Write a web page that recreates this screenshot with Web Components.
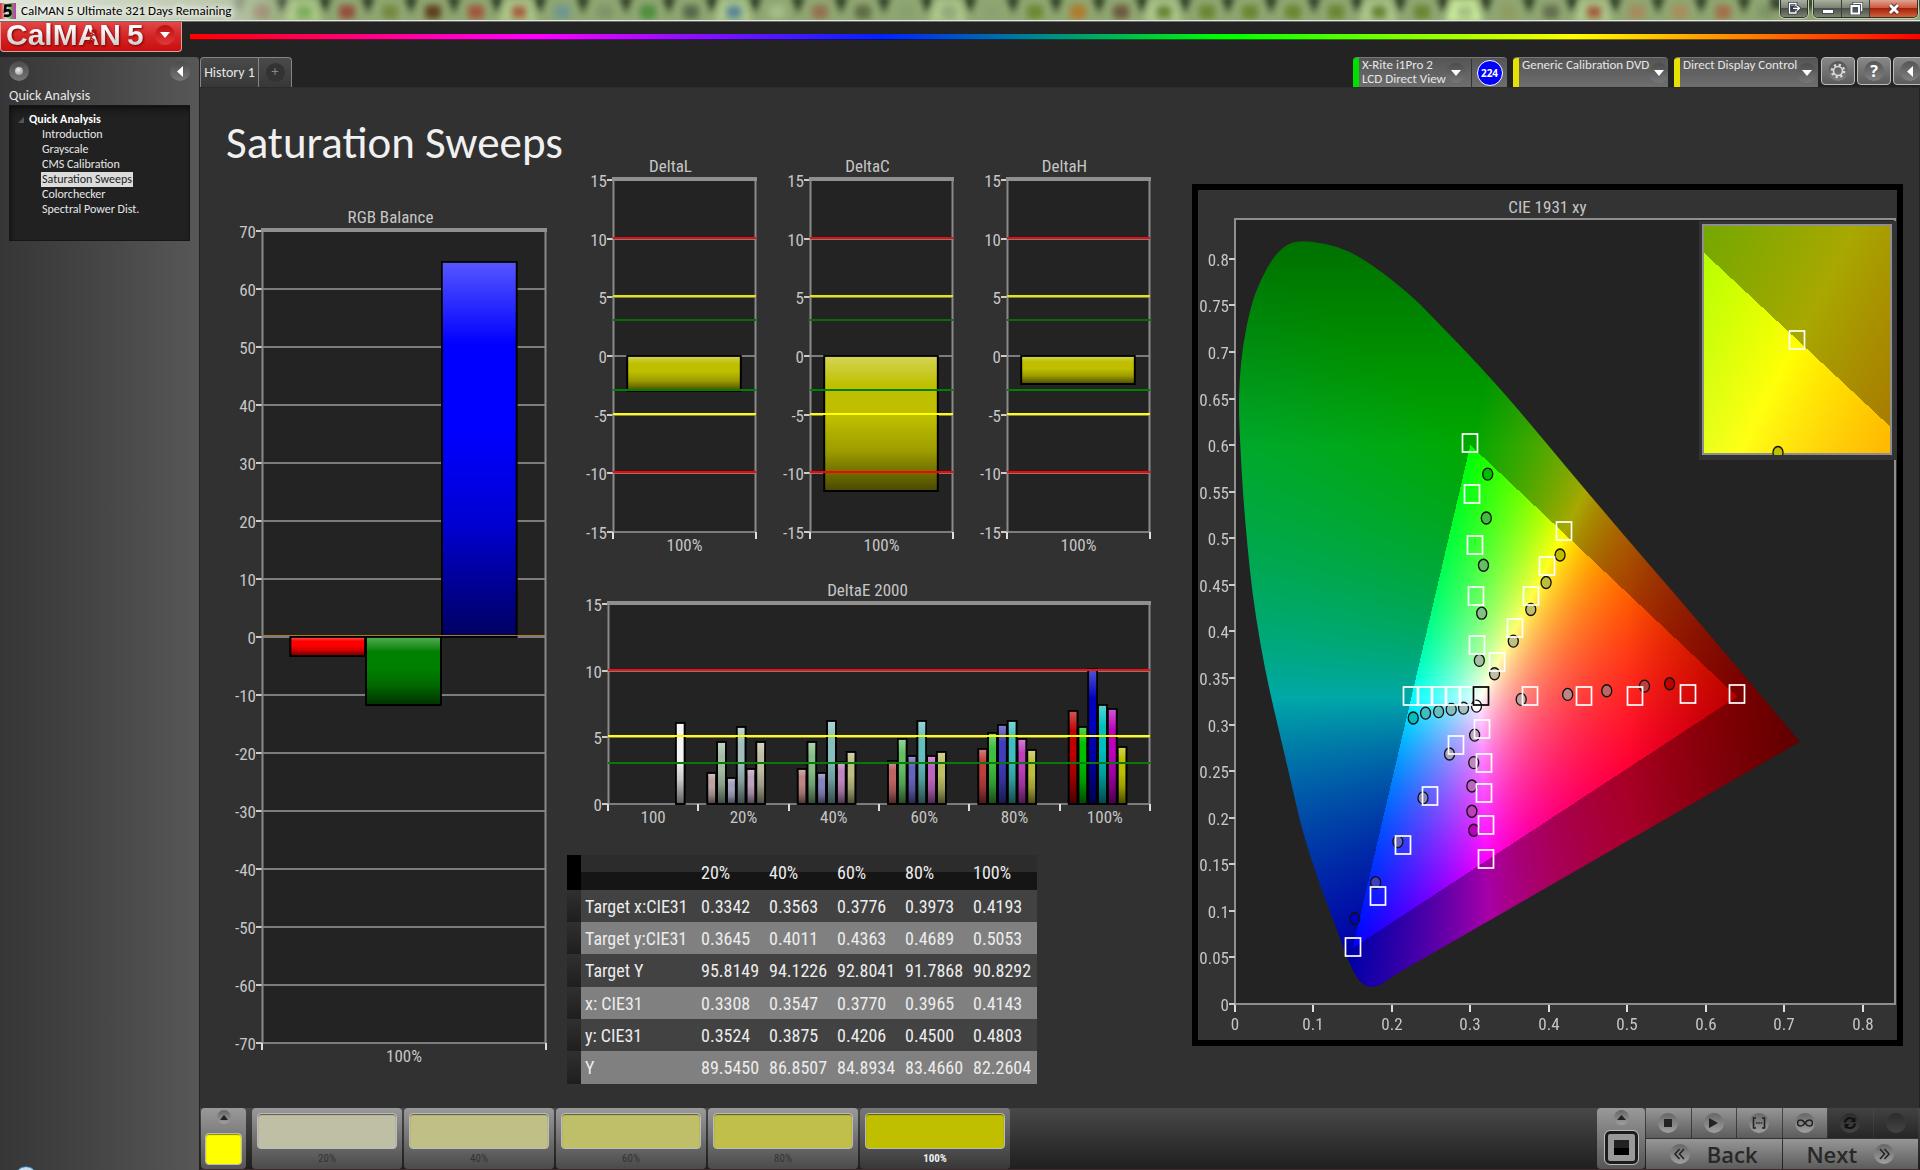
<!DOCTYPE html>
<html lang="en">
<head>
<meta charset="utf-8">
<title>CalMAN 5 Ultimate 321 Days Remaining</title>
<style>
body { margin: 0; background: #232323; color: #e6e6e6; font-family: Carlito, Lato, "Open Sans", sans-serif; font-size: 14px; }
</style>
</head>
<body>
<cal-app></cal-app>
<script>
const define = (name, html, setup) => customElements.define(name, class extends HTMLElement {
  connectedCallback() {
    if (this.shadowRoot) return;
    const t = document.createElement('template');
    t.innerHTML = html;
    this.attachShadow({ mode: 'open' }).append(t.content.cloneNode(true));
    if (setup) setup.call(this, this.shadowRoot);
  }
});
const reset = `:host,*{box-sizing:border-box} button{font:inherit;color:inherit;border:0;padding:0;margin:0;background:none;cursor:pointer} a{color:inherit;text-decoration:none} svg{display:block}`;

/* ---------- title bar ---------- */
define('window-bar', `<style>${reset}
:host{display:grid;height:22px;background:#8fa671;border-bottom:1px solid #6b6b6b;overflow:hidden}
:host>*{grid-area:1/1}
.back{width:100%;height:21px;border-bottom:1px solid #e4e6df}
.row{display:flex;align-items:flex-start;justify-content:space-between;padding-right:2px}
.name{display:flex;align-items:center;gap:5px;height:21px;color:#000;font-size:13px;line-height:21px}
.name span{text-shadow:0 0 6px #fff,0 0 6px #fff,0 0 10px #fff}
.ctl{display:flex;gap:5px}
.grp{display:flex;border:1px solid #2e332a;border-top:0;border-radius:0 0 5px 5px;overflow:hidden;box-shadow:0 0 0 1px #c4ccb8}
button{height:17px;width:28px;display:grid;place-items:center;background:linear-gradient(#a9b09f,#7b8274 45%,#4b5146 50%,#7d8575);border-right:1px solid #3a3f36}
button:last-child{border-right:0}
.grp .x{width:47px;background:linear-gradient(#e0a493,#cf5a3d 45%,#a5210b 50%,#d2603c)}
.one button{width:26px}
</style>
<svg class="back" aria-hidden="true"></svg>
<div class="row"><div class="name">
<svg width="16" height="16" viewBox="0 0 16 16"><defs><linearGradient id="q"><stop stop-color="#d33"/><stop offset=".4" stop-color="#ddd"/><stop offset=".7" stop-color="#6a4"/><stop offset="1" stop-color="#c2c"/></linearGradient></defs><rect width="16" height="16" fill="url(#q)"/><path d="M11.500 2.500H5.500L5 8Q10.500 6 10.500 10T4 12.500" fill="none" stroke="#000" stroke-width="2.600"/></svg>
<span>CalMAN 5 Ultimate 321 Days Remaining</span></div>
<div class="ctl"><div class="grp one"><button aria-label="Detach"><svg width="14" height="13" viewBox="0 0 14 13" fill="none"><path d="M9 4V1.500H2.500V11H9V8.500M5.500 4v4.500M6 6.300h6M10 4l2.500 2.300L10 8.500" stroke="#333a4a" stroke-width="3"/><path d="M9 4V1.500H2.500V11H9V8.500M6 6.300h6M10 4l2.500 2.300L10 8.500" stroke="#fff" stroke-width="1.300"/></svg></button></div>
<div class="grp"><button aria-label="Minimize"><svg width="14" height="13"><rect x="1.500" y="7.500" width="11" height="4" fill="#fff" stroke="#444b5c"/></svg></button><button aria-label="Restore"><svg width="14" height="13" fill="none"><path d="M5 3V1.500h7.500v7H11" stroke="#444b5c" stroke-width="3.400"/><path d="M5 3V1.500h7.500v7H11" stroke="#fff" stroke-width="1.600"/><rect x="2.500" y="4" width="7.500" height="7.500" stroke="#444b5c" stroke-width="3.600"/><rect x="2.500" y="4" width="7.500" height="7.500" stroke="#fff" stroke-width="2"/></svg></button><button class="x" aria-label="Close"><svg width="14" height="12" fill="none"><path d="M3 2l8 8M11 2L3 10" stroke="#5a3030" stroke-width="4.600"/><path d="M3 2l8 8M11 2L3 10" stroke="#fff" stroke-width="2.800"/></svg></button></div></div></div>`,
function (r) {
  const tint = ['#8c6a50', '#7fae5c', '#95503c', '#75893f', '#5d3f1c', '#a0563c', '#a5623f', '#6f9690', '#7f9468', '#4f8d3c', '#566b4a', '#5c8794', '#a3bd86', '#93714e', '#5f6d44', '#88a070', '#93a97a', '#8ba172', '#6c8833', '#b07a2c', '#6c5a3c', '#6b8632', '#6b8632', '#6b8632', '#6b8632', '#6b8632', '#6b8632', '#6b8632', '#a9c284', '#8f9c62', '#65704f', '#a2603f', '#a68a5e', '#a88e5c', '#a2704c', '#7f9468'];
  let s = '<defs><filter id="b" x="-10%" width="120%"><feGaussianBlur stdDeviation="3"/></filter><linearGradient id="g"><stop stop-color="#dfe5d8"/><stop offset=".75" stop-color="#c6cfba" stop-opacity=".8"/><stop offset="1" stop-color="#c6cfba" stop-opacity="0"/></linearGradient></defs><rect width="100%" height="22" fill="#8fa672"/><g filter="url(#b)">';
  for (let i = 0; i < 36; i++) {
    const x = 238 + i * 43;
    s += `<path d="M${x - 6} -4h14l-7 18z" fill="#2b3a22"/>`;
    if (i % 5 == 1 || i == 28) s += `<path d="M${x + 10} 0h24l7 22h-38z" fill="${i == 28 ? '#c9ec9b' : '#adc98c'}"/>`;
    s += `<rect x="${x + 15}" y="5" width="16" height="14" rx="4" fill="${tint[i]}"/>`;
  }
  s += '<rect x="1770" y="-4" width="160" height="14" fill="#3a4632"/></g><rect width="300" height="22" fill="url(#g)"/>';
  r.querySelector('.back').innerHTML = s;
});

/* ---------- brand strip ---------- */
define('brand-bar', `<style>${reset}
:host{display:flex;gap:8px;height:35px;background:#232323;align-items:flex-start}
.logo{width:182px;height:30px;display:flex;align-items:center;justify-content:space-between;padding:0 6px 4px 5px;background:linear-gradient(#e24848,#d42424 50%,#c80f0f);border:1px solid #dba0a0;border-top:0;border-radius:0 0 4px 4px}
.mark{position:relative;font:bold 30px/26px "Liberation Sans",sans-serif;background:linear-gradient(#fff 20%,#c6c6c6);-webkit-background-clip:text;background-clip:text;color:transparent;filter:drop-shadow(1px 1px 1px #7a0000)}
.mark b{margin-left:6px}
.mark svg{position:absolute;left:79px;top:7px}
.pick{width:20px;height:20px;border-radius:50%;display:grid;place-items:center;background:linear-gradient(#b81010,#e23a3a)}
.hue{flex:1;height:6px;margin-top:12px;border-bottom:1px solid #0008;background:linear-gradient(90deg,#f00,#f0f 20%,#0022ff 40%,#0f0 60%,#ff0 80%,#f00)}
</style>
<button class="logo" aria-label="CalMAN 5 menu"><span class="mark">CalMAN<b>5</b><svg width="14" height="16" viewBox="0 0 14 16" fill="none" stroke="#b51515" stroke-width="1.500"><circle cx="8.500" cy="2" r="1.300" fill="#b51515"/><path d="M3 5l3-1 3 2 3 0M7.500 5L6 9l3 2-1 4M6 9l-1 3-4 1"/></svg></span>
<span class="pick"><svg width="10" height="6"><path d="M0 0h10L5 6z" fill="#fff"/></svg></span></button><div class="hue"></div>`);

/* ---------- left navigation ---------- */
define('nav-panel', `<style>${reset}
:host{display:flex;flex-direction:column;width:200px;padding:0 9px;background:linear-gradient(90deg,#363636,#444 45%,#575757);border-right:1px solid #222;border-top-right-radius:4px;overflow:hidden}
.top{display:flex;justify-content:space-between;padding-top:4px}
.top button{width:20px;height:20px;border-radius:50%;display:grid;place-items:center;background:linear-gradient(#4a4a4a,#777)}
.dot{width:8px;height:8px;border-radius:50%;background:radial-gradient(circle at 40% 35%,#eee,#888)}
h2{margin:6px 0 0;font-size:14px;font-weight:400;line-height:18px}
nav{height:136px;background:#212121;border:1px solid #161616;box-shadow:inset 0 8px 8px -6px #000a,inset 6px 0 6px -6px #0008;padding-top:6px;font-size:12px;line-height:15px}
.root{display:flex;align-items:center;gap:5px;font-weight:700;padding-left:8px;color:#fff}
ul{list-style:none;margin:0;padding:0 0 0 31px}
li{height:15px} li a{padding:0 1px} [aria-current]{display:inline-block;background:#dcdcdc;color:#222}
.orb{width:24px;height:24px;border-radius:50%;background:radial-gradient(#fff,#9cc4e0);border:1px solid #2b6d9c;margin:auto 0 -20px 5px;flex:none}
</style>
<div class="top"><button aria-label="Record"><span class="dot"></span></button><button aria-label="Collapse"><svg width="6" height="11"><path d="M6 0v11L0 5.500z" fill="#fff"/></svg></button></div>
<h2>Quick Analysis</h2>
<nav><div class="root"><svg width="6" height="6"><path d="M6 0v6H0z" fill="#555"/></svg>Quick Analysis</div>
<ul><li><a href="#">Introduction</a></li><li><a href="#">Grayscale</a></li><li><a href="#">CMS Calibration</a></li><li><a href="#" aria-current="page">Saturation Sweeps</a></li><li><a href="#">Colorchecker</a></li><li><a href="#">Spectral Power Dist.</a></li></ul></nav>
<div class="orb"></div>`);

/* ---------- tab row and device selectors ---------- */
define('device-picker', `<style>${reset}
:host{display:flex;height:30px;border-radius:4px 4px 0 0;overflow:hidden;background:linear-gradient(#555,#6e6e6e);border-top:1px solid #777;font-size:13px}
.flag{flex:none;width:6px;background:var(--flag)}
button{flex:1;min-width:0;display:flex;justify-content:space-between;padding:0 5px 0 3px;text-align:left;line-height:14px;white-space:nowrap}
.d{flex:none;width:20px;height:20px;margin-top:5px;border-radius:50%;display:grid;place-items:center;background:linear-gradient(#4c4c4c,#777)}
</style><span class="flag"></span><button aria-haspopup="listbox"><span><slot></slot></span><span class="d"><svg width="10" height="6"><path d="M0 0h10L5 6z" fill="#fff"/></svg></span></button><slot name="badge"></slot>`);

define('tab-row', `<style>${reset}
:host{display:flex;justify-content:space-between;height:31px;background:#232323;border-bottom:1px solid #2b2b2b;overflow:hidden}
.tabs{display:flex;height:30px;border:1px solid #858585;border-bottom:0;border-radius:4px 4px 0 0;background:linear-gradient(#4a4a4a,#383838)}
.tabs button{width:57px}.tabs .add{width:33px;border-left:1px solid #858585;display:grid;place-items:center}
.add span{width:19px;height:19px;line-height:18px;border-radius:50%;background:#333;color:#888}
.dev{display:flex;gap:6px;margin-right:-7px}
.badge{flex:none;width:36px;border-left:1px solid #333;display:grid;place-items:center;margin-top:1px}
.badge b{width:26px;height:26px;border-radius:50%;border:1px solid #fff;background:#00f;color:#fff;font:bold 10px/24px "Open Sans",sans-serif;text-align:center}
.sq{display:flex;gap:2px;margin-left:-3px}
.sq button{width:34px;height:28px;border:1px solid #bbb;border-radius:4px;background:linear-gradient(#888,#5c5c5c);display:grid;place-items:center}
.sq span{width:20px;height:20px;border-radius:50%;background:linear-gradient(#555,#808080);display:grid;place-items:center;font:bold 16px/20px "Open Sans",sans-serif;color:#fff}
</style>
<div class="tabs" role="tablist"><button role="tab" aria-selected="true">History 1</button><button class="add" aria-label="Add tab"><span>+</span></button></div>
<div class="dev">
<device-picker style="width:154px;--flag:#00e000">X-Rite i1Pro 2<br>LCD Direct View<span slot="badge" class="badge"><b>224</b></span></device-picker>
<device-picker style="width:155px;--flag:#e8e000">Generic Calibration DVD</device-picker>
<device-picker style="width:144px;--flag:#e8e000">Direct Display Control</device-picker>
<div class="sq"><button aria-label="Settings"><span><svg width="16" height="16" viewBox="-8 -8 16 16" fill="none" stroke="#ddd"><circle r="4.500" stroke-width="1.600"/><circle r="6.200" stroke-width="2.200" stroke-dasharray="2.200 2.670"/></svg></span></button><button aria-label="Help"><span>?</span></button><button aria-label="Collapse"><span><svg width="6" height="11"><path d="M6 0v11L0 5.500z" fill="#fff"/></svg></span></button></div></div>`);

/* ---------- bar charts ---------- */
const shade = `<linearGradient id="gl" x2="0" y2="1"><stop stop-color="#fff" stop-opacity=".34"/><stop offset=".22" stop-color="#fff" stop-opacity="0"/><stop offset=".45" stop-color="#000" stop-opacity="0"/><stop offset=".7" stop-color="#000" stop-opacity=".18"/><stop offset="1" stop-color="#000" stop-opacity=".62"/></linearGradient>`;
const onResize = (el, fn) => { fn(); new ResizeObserver(fn).observe(el); };

define('bar-chart', `<style>
:host{display:block;min-width:0;color:#c6c6c6;font-family:"Roboto Condensed","Open Sans",sans-serif;font-size:17px}
div{height:20px;line-height:20px;text-align:center}
svg{display:block;width:100%;overflow:visible} text{fill:#c6c6c6}
</style><div><slot></slot></div><svg></svg>`,
function (r) {
  const c = JSON.parse(this.getAttribute('config'));
  const svg = r.querySelector('svg');
  onResize(this, () => {
    const W = this.clientWidth, x0 = c.gutter, w = W - x0, top = 4, h = c.height;
    const Y = v => top + Math.round((c.max - v) / (c.max - c.min) * h);
    svg.setAttribute('height', h + 28);
    let s = `<defs>${shade}</defs><rect x="${x0}" y="${top}" width="${w}" height="${h}" fill="#232323"/>`;
    for (let v = c.min; v <= c.max; v += c.step) {
      s += `<rect x="${x0}" y="${Y(v) - 1}" width="${w}" height="2" fill="#7c7c7c"/><rect x="${x0 - 6}" y="${Y(v) - 1}" width="6" height="2" fill="#ccc"/><text x="${x0 - 6}" y="${Y(v) + 7}" text-anchor="end">${v}</text>`;
    }
    s += `<path d="M${x0 + .5} ${top}v${h}M${x0 + w - .5} ${top}v${h}" stroke="#8a8a8a" stroke-width="2"/><rect x="${x0 - 1}" y="${top - 3}" width="${w + 2}" height="4" fill="#8f8f8f"/>`;
    const n = c.cats.length, cw = w / n;
    c.cats.forEach((cat, i) => {
      s += `<text x="${x0 + cw * (i + .5)}" y="${top + h + 19}" text-anchor="middle">${cat.label}</text>`;
      const pitch = c.pitch || cw * .8 / cat.bars.length, start = c.pitch ? 9 : cw * .1;
      cat.bars.forEach((b, k) => {
        if (!b) return;
        const [v, col] = b, a = Y(Math.max(v, 0)), z = Y(Math.min(v, 0)), x = x0 + cw * i + start + pitch * k;
        s += `<g stroke="#000" stroke-width="1.600"><rect x="${x}" y="${a}" width="${pitch - 1}" height="${z - a}" fill="${col}"/><rect x="${x}" y="${a}" width="${pitch - 1}" height="${z - a}" fill="url(#gl)"/></g>`;
      });
    });
    for (let i = 0; i <= n; i++) s += `<rect x="${Math.round(x0 + cw * i) - 1}" y="${top + h}" width="2" height="7" fill="#ddd"/>`;
    for (const [v, col, t] of c.lines) s += `<rect x="${x0}" y="${Y(v) - 2}" width="${w}" height="${t || 2}" fill="${col}"/>`;
    svg.innerHTML = s;
  });
});

/* ---------- CIE chromaticity chart ---------- */
const locus = [[.0855,.8195],[.0677,.8166],[.0499,.8034],[.0321,.7766],[.0203,.7498],[.0102,.7087],[.0055,.6694],[.0049,.6336],[.0072,.5907],[.0102,.5478],[.0155,.4942],[.0221,.4406],[.0321,.387],[.0428,.3406],[.0559,.2941],[.0707,.2405],[.0855,.1869],[.1003,.1476],[.1152,.1118],[.13,.0797],[.1389,.0582],[.1478,.0404],[.1567,.0261],[.1656,.0196],[.1733,.0178],[.1834,.0196],[.1982,.0279],[.72,.2816],[.5896,.412],[.5066,.4924],[.4473,.5514],[.3939,.605],[.3583,.6408],[.3227,.6747],[.2931,.7015],[.2634,.7273],[.2338,.7533],[.2041,.7748],[.1745,.7937],[.1448,.8087],[.1152,.8166]];
const targets = [[.3,.6018],[.3025,.5471],[.3055,.4925],[.3078,.4378],[.309,.3856],[.4193,.5075],[.3973,.4705],[.3776,.4375],[.3563,.4035],[.3342,.3675],[.3766,.3305],[.4454,.3305],[.5094,.3305],[.577,.3323],[.6393,.3323],[.2238,.3305],[.2416,.3305],[.2595,.3305],[.2773,.3305],[.2951,.3305],[.3144,.2955],[.3173,.2591],[.3179,.2265],[.3197,.1922],[.3197,.1558],[.2812,.2777],[.2485,.223],[.2147,.1704],[.1827,.1158],[.1501,.0607]];
const measured = { g: [[.3221,.5689],[.3203,.5217],[.3167,.471],[.3144,.4195],[.3114,.3688]], y: [[.4143,.482],[.3965,.4525],[.377,.4235],[.3547,.3895],[.3308,.3545]], r: [[.5539,.3438],[.5219,.3413],[.4738,.3363],[.424,.3323],[.3648,.327]], c: [[.2272,.307],[.2429,.3123],[.2595,.3138],[.2756,.3162],[.2913,.3177]], m: [[.3043,.1865],[.3019,.2069],[.3019,.234],[.3043,.2591],[.3054,.2887]], b: [[.1525,.0915],[.1792,.1304],[.2076,.1744],[.2396,.2212],[.2734,.2684]] };
const mix = (key, s) => {
  const lo = Math.round(190 * Math.pow(Math.max(1 - s, 0), .7));
  const on = { r: [1,0,0], g: [0,1,0], b: [0,0,1], c: [0,1,1], m: [1,0,1], y: [1,1,0] }[key];
  return `rgb(${on.map(v => v ? 190 : lo).join()})`;
};
const paintGamut = (W, H, xa, xb, ya, yb, clip) => {
  const cv = document.createElement('canvas'); cv.width = W; cv.height = H;
  const g = cv.getContext('2d'), im = g.createImageData(W, H), d = im.data;
  const T = [[.64,.33],[.3,.6],[.15,.06]];
  const side = (a, b, x, y) => (b[0] - a[0]) * (y - a[1]) - (b[1] - a[1]) * (x - a[0]) >= 0;
  for (let j = 0, p = 0; j < H; j++) for (let i = 0; i < W; i++, p += 4) {
    const x = xa + (xb - xa) * (i + .5) / W, y = Math.max(yb - (yb - ya) * (j + .5) / H, .001), z = 1 - x - y;
    const c = [3.2406 * x - 1.5372 * y - .4986 * z, -.9689 * x + 1.8758 * y + .0415 * z, .0557 * x - .204 * y + 1.057 * z].map(v => Math.max(v, 0));
    const m = Math.max(...c) || 1;
    const inside = side(T[0], T[1], x, y) && side(T[1], T[2], x, y) && side(T[2], T[0], x, y);
    let k = inside ? 255 : 168;
    if (x > .5) k *= Math.max(1 - 2 * (x - .5), .5);
    if (y > .6) k *= 1 - 1.5 * (y - .6);
    for (let q = 0; q < 3; q++) d[p + q] = k * c[q] / m;
    d[p + 3] = 255;
  }
  g.putImageData(im, 0, 0);
  if (clip) {
    const P = locus.map(([x, y]) => [(x - xa) / (xb - xa) * W, (yb - y) / (yb - ya) * H]), N = P.length, tip = 27;
    const mid = (a, b) => [(a[0] + b[0]) / 2, (a[1] + b[1]) / 2];
    g.globalCompositeOperation = 'destination-in';
    g.beginPath(); g.moveTo(...mid(P[N - 1], P[0]));
    for (let i = 0; i < N; i++) {
      if (i == tip) { g.lineTo(...P[i]); continue; }
      if (i == tip - 1) { g.quadraticCurveTo(...P[i], P[i][0] + 6, P[i][1] - 4); continue; }
      g.quadraticCurveTo(...P[i], ...mid(P[i], P[(i + 1) % N]));
    }
    g.fill();
  }
  return cv;
};
define('cie-chart', `<style>
:host{display:block;min-width:0;border:6px solid #000;background:#333;padding:7px 0 3px;color:#c6c6c6;font:17px "Roboto Condensed","Open Sans",sans-serif}
h3{margin:0;font:inherit;line-height:20px;text-align:center}
.stack{display:grid}.stack>*{grid-area:1/1;display:block}svg{width:100%}
text{fill:#c6c6c6}
</style><h3><slot></slot></h3><div class="stack"><canvas></canvas><svg></svg></div>`,
function (r) {
  const svg = r.querySelector('svg'), cv = r.querySelector('canvas');
  onResize(this, () => {
    const W = this.clientWidth, x0 = 37, y0 = 2, w = W - x0 - 2, h = 785, xm = .8412, ym = .8427;
    const X = x => x0 + x / xm * w, Y = y => y0 + h - y / ym * h;
    cv.width = W; cv.height = h + 35; svg.setAttribute('height', h + 35);
    const g = cv.getContext('2d');
    g.fillStyle = '#232323'; g.fillRect(x0, y0, w, h);
    g.drawImage(paintGamut(w, h, 0, xm, 0, ym, true), x0, y0);
    g.strokeStyle = '#8f8f8f'; g.lineWidth = 2; g.strokeRect(x0, y0, w, h);
    const iw = 190, ih = 231, ix = W - 5 - iw, iy = y0 + 5, cx = .4193, cy = .5053, sx = 3830, sy = 4500;
    g.fillStyle = '#333'; g.fillRect(ix - 3, iy - 3, iw + 10, ih + 8);
    g.drawImage(paintGamut(iw, ih, cx - iw / 2 / sx, cx + iw / 2 / sx, cy - ih / 2 / sy, cy + ih / 2 / sy), ix, iy);
    g.strokeStyle = '#8f8f8f'; g.strokeRect(ix + 1, iy + 1, iw - 2, ih - 2);
    let s = `<defs><clipPath id="k"><rect x="${ix}" y="${iy}" width="${iw}" height="${ih}"/></clipPath></defs>`;
    for (let i = 0; i <= 16; i++) {
      const v = i / 20, y = Math.round(Y(v));
      s += `<rect x="${x0 - 6}" y="${y - 1}" width="6" height="2" fill="#ccc"/><text x="${x0 - 6}" y="${y + 7}" text-anchor="end">${v}</text>`;
    }
    for (let i = 0; i <= 8; i++) {
      const x = Math.round(X(i / 10));
      s += `<rect x="${x - 1}" y="${y0 + h + 1}" width="2" height="7" fill="#ddd"/><text x="${x}" y="${y0 + h + 26}" text-anchor="middle">${i / 10}</text>`;
    }
    const dot = (x, y, f) => `<ellipse cx="${x}" cy="${y}" rx="5" ry="6" fill="${f}" stroke="#111" stroke-width="1.300"/>`;
    for (const key in measured) measured[key].forEach(([x, y], i) => s += dot(X(x), Y(y), mix(key, 1 - i * .2)));
    s += dot(X(.3078), Y(.3198), '#fff');
    const box = (x, y, col) => `<rect x="${Math.round(x) - 7.5}" y="${Math.round(y) - 9}" width="15" height="18" fill="none" stroke="${col}" stroke-width="1.700"/>`;
    targets.forEach(([x, y]) => s += box(X(x), Y(y), '#fff'));
    s += box(X(.3132), Y(.3305), '#000');
    s += box(ix + iw / 2, iy + ih / 2, '#fff') + `<g clip-path="url(#k)">${dot(ix + iw / 2 - 19, iy + ih / 2 + 113, '#bfbf00')}</g>`;
    svg.innerHTML = s;
  });
});

/* ---------- readings table ---------- */
define('readings-table', `<style>
:host{display:block}
table{border-collapse:collapse;font:18px "Roboto Condensed","Open Sans",sans-serif;color:#ececec;table-layout:fixed;width:470px}
th,td{height:32px;padding:0 0 0 4px;text-align:left;font-weight:inherit;white-space:nowrap}
thead th{height:35px;background:linear-gradient(#2c2c2c 50%,#151515 50%)}
tbody tr{background:#424242} tbody tr:nth-child(even){background:#808080}
tbody td:first-child{background:linear-gradient(#303030,#1e1e1e)}
thead th:first-child{background:#000}
tbody tr:nth-child(3n){height:33px}
</style><table><colgroup><col style="width:14px"><col style="width:116px"><col span="5" style="width:68px"></colgroup><thead></thead><tbody></tbody></table>`,
function (r) {
  const rows = [['Target x:CIE31', '0.3342', '0.3563', '0.3776', '0.3973', '0.4193'], ['Target y:CIE31', '0.3645', '0.4011', '0.4363', '0.4689', '0.5053'], ['Target Y', '95.8149', '94.1226', '92.8041', '91.7868', '90.8292'], ['x: CIE31', '0.3308', '0.3547', '0.3770', '0.3965', '0.4143'], ['y: CIE31', '0.3524', '0.3875', '0.4206', '0.4500', '0.4803'], ['Y', '89.5450', '86.8507', '84.8934', '83.4660', '82.2604']];
  r.querySelector('thead').innerHTML = '<tr>' + ['', '', '20%', '40%', '60%', '80%', '100%'].map(t => `<th scope="col">${t}</th>`).join('') + '</tr>';
  r.querySelector('tbody').innerHTML = rows.map(([n, ...v]) => `<tr><td></td><th scope="row">${n}</th>${v.map(t => `<td>${t}</td>`).join('')}</tr>`).join('');
});

/* ---------- workspace ---------- */
define('sweep-page', `<style>
:host{display:grid;grid-template-columns:340fr 626fr 711fr;padding:0 16px 0 26px;flex:1;background:#313131;border-right:1px solid #222;align-items:start}
section{min-width:0}
h1{margin:27px 0 0;height:92px;font-size:45px;font-weight:400;line-height:56px;color:#f0f0f0;white-space:nowrap}
.rgb{margin:0 20px 0 9px}
.mid{padding:68px 42px 0 19px}
.trio{display:grid;grid-template-columns:repeat(3,1fr);gap:26px;margin-bottom:24px}
readings-table{margin:27px 0 20px -18px}
cie-chart{margin-top:96px}
</style>
<section><h1>Saturation Sweeps</h1><div class="rgb" id="rgb"></div></section>
<section class="mid"><div class="trio"></div><div id="de"></div><readings-table></readings-table></section>
<cie-chart>CIE 1931 xy</cie-chart>`,
function (r) {
  const chart = (title, cfg) => { const e = document.createElement('bar-chart'); e.textContent = title; e.setAttribute('config', JSON.stringify(cfg)); return e; };
  r.getElementById('rgb').append(chart('RGB Balance', { gutter: 27, height: 812, min: -70, max: 70, step: 10, lines: [[0, '#a87a2a', 1]], cats: [{ label: '100%', bars: [[-3.3, '#f00'], [-11.7, '#008000'], [64.6, '#00f']] }] }));
  const lim = [[3, '#0a6a0a'], [-3, '#008000'], [5, '#e6e600'], [-5, '#ffff00'], [10, '#e01010'], [-10, '#ff0000']];
  [['DeltaL', -2.95], ['DeltaC', -11.5], ['DeltaH', -2.35]].forEach(([t, v]) =>
    r.querySelector('.trio').append(chart(t, { gutter: 28, height: 352, min: -15, max: 15, step: 5, lines: lim, cats: [{ label: '100%', bars: [[v, '#bfbf00']] }] })));
  const vals = [[2.33, 4.65, 1.93, 5.8, 2.6, 4.65], [2.6, 4.65, 2.33, 6.2, 3.15, 3.9], [3.25, 4.9, 3.6, 6.2, 3.6, 3.9], [4.15, 5.35, 5.95, 6.2, 4.9, 4.05], [7, 5.8, 10.1, 7.45, 7.1, 4.25]];
  const cats = [{ label: '100', bars: [0, 0, 0, 0, 0, 0, [6.05, '#f4f4f4']] }].concat(vals.map((a, i) => ({ label: (i + 1) * 20 + '%', bars: a.map((v, k) => [v, mix('rgbcmy'[k], (i + 1) / 5)]) })));
  r.getElementById('de').append(chart('DeltaE 2000', { gutter: 23, height: 200, min: 0, max: 15, step: 5, pitch: 9.8, lines: [[10, '#f01010'], [5, '#ffff00'], [3, '#0a780a']], cats }));
});

/* ---------- bottom bar ---------- */
define('level-button', `<style>${reset}
:host{display:block;width:150px}
button{display:flex;flex-direction:column;width:100%;height:61px;padding:5px 5px 0;border-radius:4px;background:linear-gradient(#9a9a9a,#6e6e6e 55%,#4a4a4a);color:#333;font:11px/20px "Roboto Condensed",sans-serif;align-items:center}
:host([active]) button{background:linear-gradient(#777,#555 55%,#383838);color:#f0f0f0;font-weight:700}
i{width:100%;height:37px;border-radius:4px;border:1px solid #bbb;background:var(--c);box-shadow:inset 0 1px 1px #0008}
</style><button><i></i><slot></slot></button>`);
define('control-bar', `<style>${reset}
:host{display:flex;align-items:flex-start;gap:2px;height:62px;padding:0 2px 0 1px;background:linear-gradient(#484848,#1f1f1f);border-bottom:1px solid #402a2e}
.pat{width:45px;height:61px;margin-right:4px;border-radius:4px;background:linear-gradient(#9a9a9a,#555);display:flex;flex-direction:column;align-items:center;padding-top:2px;gap:9px}
.pat i{width:37px;height:32px;border:1px solid #bbb;border-radius:4px;background:#ff0;box-shadow:inset 0 1px 1px #880}
.o{width:20px;height:20px;border-radius:50%;background:linear-gradient(#666,#a0a0a0);display:grid;place-items:center}
.pat .o{width:14px;height:14px}
.pat .o path{fill:#222}
.win{margin-left:auto;width:48px;height:61px;background:linear-gradient(#999,#555);border-radius:4px;display:grid;grid-template-rows:18px 1fr;justify-items:center;align-items:center}
.win .o{width:15px;height:15px}
.sel{width:33px;height:33px;border:3px solid #1c1c1c;outline:1px solid #bbb;border-radius:5px;display:grid;place-items:center;background:#999}
.sel i{width:15px;height:15px;background:linear-gradient(#222 50%,#000 50%)}
.pad{display:grid;width:272px;grid-template-columns:repeat(6,1fr);grid-template-rows:30px 30px;gap:1px;margin-left:-1px}
.pad button{background:linear-gradient(#969696,#5c5c5c);display:grid;place-items:center;color:#282828}
.pad .off{background:linear-gradient(#424242,#262626)}
.off .o{background:linear-gradient(#2c2c2c,#444)}
.pad .wide{grid-column:span 3;display:flex;align-items:center;justify-content:center;gap:17px;font:600 22px/28px "Open Sans",sans-serif}
</style>
<button class="pat" aria-label="Pattern"><span class="o"><svg width="8" height="5"><path d="M0 5h8L4 0z"/></svg></span><i></i></button>
<level-button style="--c:#bfbfa6">20%</level-button><level-button style="--c:#bfbf86">40%</level-button><level-button style="--c:#bfbf6a">60%</level-button><level-button style="--c:#bfbf4a">80%</level-button><level-button active style="--c:#bfbf00">100%</level-button>
<div class="win"><button class="o" aria-label="Expand"><svg width="9" height="5"><path d="M0 5h9L4.500 0z" fill="#222"/></svg></button><button class="sel" aria-label="Window"><i></i></button></div>
<div class="pad"><button aria-label="Stop"><span class="o"><svg width="8" height="8"><rect width="8" height="8" fill="#222"/></svg></span></button>
<button aria-label="Play"><span class="o"><svg width="9" height="10"><path d="M0 0v10l9-5z" fill="#222"/></svg></span></button>
<button aria-label="Read series"><span class="o"><svg width="14" height="12" fill="none" stroke="#222" stroke-width="1.600"><path d="M4 1H1.500v10H4M10 1h2.500v10H10"/><path d="M4 6h1.500M6.300 6h1.500M8.600 6h1.500"/></svg></span></button>
<button aria-label="Read continuous"><span class="o"><svg width="16" height="8" fill="none" stroke="#222" stroke-width="1.500"><path d="M8 4C6 1 4.500 1 3.500 1a2.800 2.800 0 000 6C4.500 7 6 7 8 4s3.500-3 4.500-3a2.800 2.800 0 010 6C11.500 7 10 7 8 4z"/></svg></span></button>
<button class="off" aria-label="Refresh"><span class="o"><svg width="14" height="14" fill="none" stroke="#111" stroke-width="2.200"><path d="M2 6.500a5 5 0 018.500-3M12 7.500a5 5 0 01-8.500 3"/><path d="M12.500 1v5h-5zM1.500 13V8h5z" fill="#111" stroke="none"/></svg></span></button>
<button class="off" aria-label="Blank"><span class="o"></span></button>
<button class="wide"><span class="o"><svg width="11" height="12" fill="none" stroke="#222" stroke-width="1.500"><path d="M5.500 1L1 6l4.500 5M10 1L5.500 6l4.500 5"/></svg></span>Back</button>
<button class="wide">Next<span class="o"><svg width="11" height="12" fill="none" stroke="#222" stroke-width="1.500"><path d="M1 1l4.500 5L1 11M5.500 1L10 6l-4.500 5"/></svg></span></button></div>`);

define('cal-app', `<style>
:host{display:flex;flex-direction:column;min-height:100vh}
.body{display:flex;flex:1}
nav-panel{flex:none}
main{flex:1;min-width:0;display:flex;flex-direction:column}
</style><window-bar></window-bar><brand-bar></brand-bar>
<div class="body"><nav-panel></nav-panel><main><tab-row></tab-row><sweep-page></sweep-page><control-bar></control-bar></main></div>`);
</script>
</body>
</html>
